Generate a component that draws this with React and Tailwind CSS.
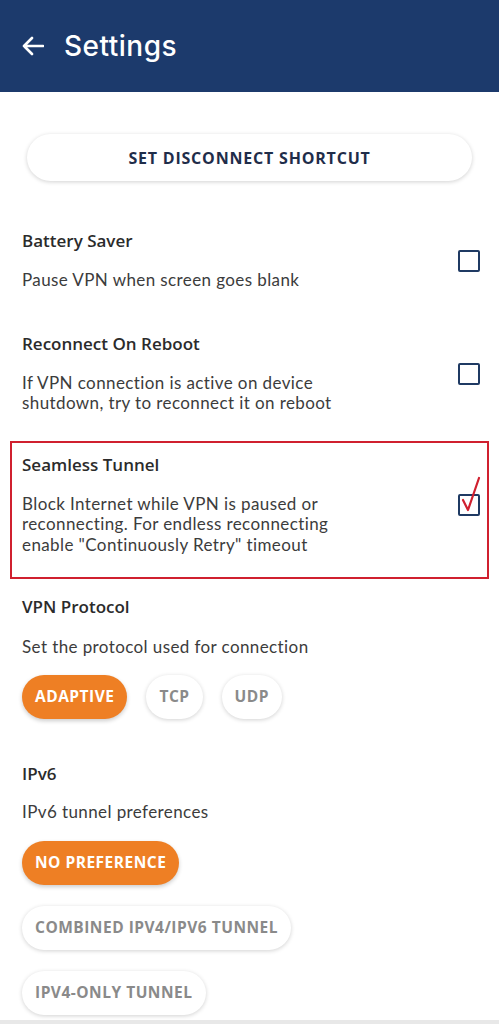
import React from "react";

const body = { fontFamily: '"Open Sans", "Liberation Sans", sans-serif' };
const descFont = { fontFamily: 'Lato, "Open Sans", sans-serif' };

function Checkbox({ checked, className }) {
  return (
    <div className={"relative w-[22px] h-[22px] shrink-0 " + className}>
      <div className="w-[22px] h-[22px] border-[2.5px] border-[#1f3a63] rounded-[2px]" />
      {checked && (
        <svg className="absolute left-0 top-[-18px]" width="30" height="42" viewBox="0 0 30 42" fill="none">
          <path d="M5 24 L10 34 L21 2" stroke="#d0202f" strokeWidth="2.2" strokeLinecap="round" strokeLinejoin="round" />
        </svg>
      )}
    </div>
  );
}

function Desc({ children, className = "" }) {
  return (
    <div className={"text-[17px] leading-[20.5px] tracking-[0.4px] text-[#3c3c3c] " + className} style={descFont}>
      {children}
    </div>
  );
}

function Title({ children, className = "" }) {
  return <div className={"text-[17px] leading-[20px] font-semibold text-[#2b2b2b] " + className}>{children}</div>;
}

function Row({ title, lines, checked, boxClass }) {
  return (
    <div className="flex items-center justify-between">
      <div>
        <Title>{title}</Title>
        <div className="mt-[19px]">
          {lines.map((l) => (
            <Desc key={l}>{l}</Desc>
          ))}
        </div>
      </div>
      <Checkbox checked={checked} className={boxClass} />
    </div>
  );
}

function Chip({ label, active }) {
  return (
    <div
      className={
        "h-[44px] px-[13px] rounded-full flex items-center text-[15.5px] font-bold tracking-[0.5px] " +
        (active
          ? "bg-[#ee7f24] text-white shadow-[0_2px_4px_rgba(0,0,0,0.2)]"
          : "bg-white text-[#8a8a8a] shadow-[0_1px_4px_rgba(0,0,0,0.18)]")
      }
    >
      {label}
    </div>
  );
}

export default function App() {
  return (
    <div className="w-[499px] h-[1024px] bg-white overflow-hidden flex flex-col" style={body}>
      <div className="h-[92px] bg-[#1c3a6c] flex items-center px-[22px] shrink-0">
        <svg width="22" height="20" viewBox="0 0 22 20" fill="none">
          <path d="M21 10 H2 M10 2 L2 10 L10 18" stroke="white" strokeWidth="2.6" strokeLinecap="round" strokeLinejoin="round" />
        </svg>
        <div className="ml-[20px] text-white text-[28px] font-medium tracking-[0.5px]" style={{ fontFamily: '"Inter", "Open Sans", sans-serif' }}>
          Settings
        </div>
      </div>

      <div className="flex-1 px-[22px]">
        <div className="mt-[42px] mx-[5px] h-[47px] rounded-full bg-white shadow-[0_1px_4px_rgba(0,0,0,0.18)] flex items-center justify-center text-[16px] font-bold tracking-[0.8px] text-[#1f2d4a]">
          SET DISCONNECT SHORTCUT
        </div>

        <div className="mt-[50px]">
          <Row title="Battery Saver" lines={["Pause VPN when screen goes blank"]} boxClass="-mr-[3px]" />
        </div>
        <div className="mt-[43px]">
          <Row
            title="Reconnect On Reboot"
            boxClass="-mr-[3px]"
            lines={["If VPN connection is active on device", "shutdown, try to reconnect it on reboot"]}
          />
        </div>

        <div className="mt-[27px] -mx-[12px] border-2 border-[#d0202f] pt-[12px] pb-[22px] pl-[10px] pr-[7px]">
          <Row
            title="Seamless Tunnel"
            checked
            boxClass=""
            lines={[
              "Block Internet while VPN is paused or",
              "reconnecting. For endless reconnecting",
              'enable "Continuously Retry" timeout',
            ]}
          />
        </div>

        <Title className="mt-[18px]">VPN Protocol</Title>
        <Desc className="mt-[20px]">Set the protocol used for connection</Desc>
        <div className="mt-[17px] flex gap-[19px]">
          <Chip label="ADAPTIVE" active />
          <Chip label="TCP" />
          <Chip label="UDP" />
        </div>

        <Title className="mt-[45px]">IPv6</Title>
        <Desc className="mt-[18px]">IPv6 tunnel preferences</Desc>
        <div className="mt-[19px] flex flex-col items-start gap-[21px]">
          <Chip label="NO PREFERENCE" active />
          <Chip label="COMBINED IPV4/IPV6 TUNNEL" />
          <Chip label="IPV4-ONLY TUNNEL" />
        </div>
      </div>
      <div className="h-[4px] bg-[#e8e8e8] shrink-0" />
    </div>
  );
}
